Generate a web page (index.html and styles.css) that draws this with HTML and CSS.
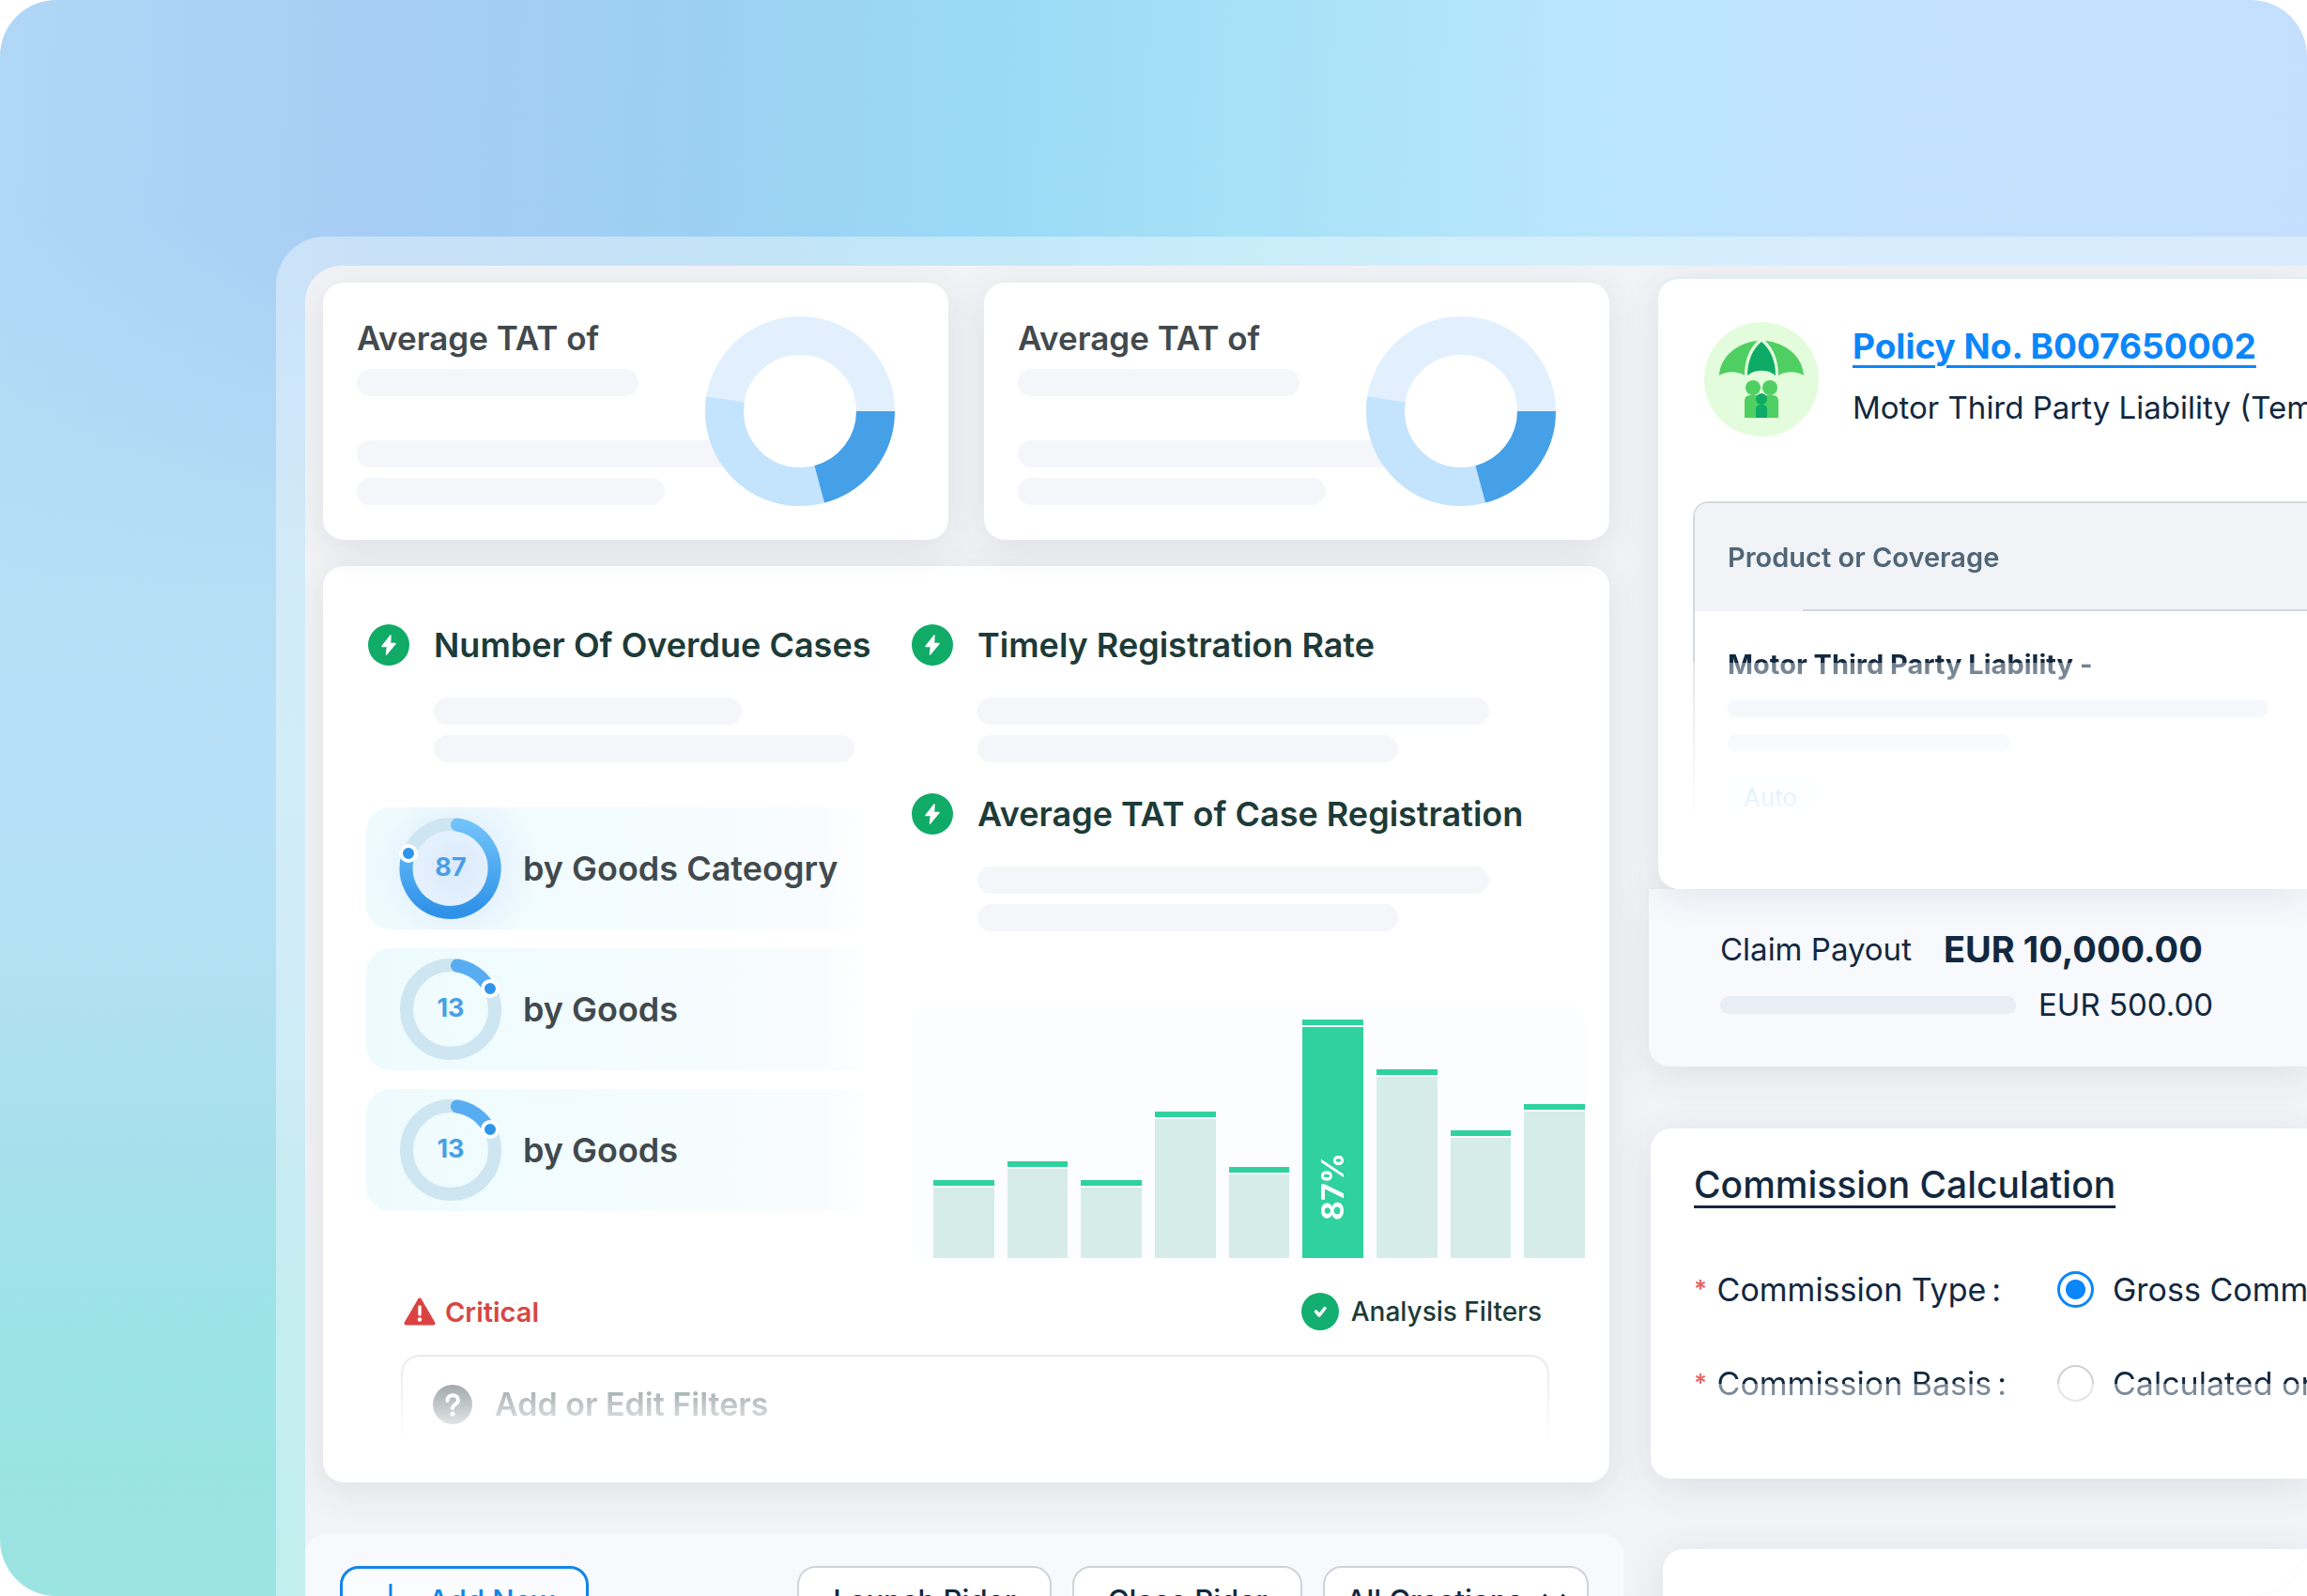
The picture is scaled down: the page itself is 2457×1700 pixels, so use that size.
FILE: index.html
```html
<!DOCTYPE html>
<html lang="en">
<head>
  <meta charset="UTF-8">
  <meta name="viewport" content="width=device-width, initial-scale=1.0">
  <title>Claims dashboard</title>
  <link rel="stylesheet" href="styles.css">
</head>
<body>
  <div class="stage">
    <div class="frame">
      <div class="board">

        <main class="main-col">
          <div class="tat-row">
            <section class="card tat-card">
              <div class="tat-text">
                <h2 class="title">Average TAT of</h2>
                <div class="bone w-300"></div>
                <div class="bone w-full space"></div>
                <div class="bone w-328"></div>
              </div>
              <svg class="donut" viewBox="0 0 202 202" aria-hidden="true">
                <g fill="none" stroke-width="41">
                  <circle cx="101" cy="101" r="80.5" stroke="#e2f0fe"/>
                  <circle cx="101" cy="101" r="80.5" stroke="#c4e3fd" pathLength="360" stroke-dasharray="114 246" stroke-dashoffset="-75"/>
                  <circle cx="101" cy="101" r="80.5" stroke="#45a0e8" pathLength="360" stroke-dasharray="75 285"/>
                </g>
              </svg>
            </section>
            <section class="card tat-card">
              <div class="tat-text">
                <h2 class="title">Average TAT of</h2>
                <div class="bone w-300"></div>
                <div class="bone w-full space"></div>
                <div class="bone w-328"></div>
              </div>
              <svg class="donut" viewBox="0 0 202 202" aria-hidden="true">
                <g fill="none" stroke-width="41">
                  <circle cx="101" cy="101" r="80.5" stroke="#e2f0fe"/>
                  <circle cx="101" cy="101" r="80.5" stroke="#c4e3fd" pathLength="360" stroke-dasharray="114 246" stroke-dashoffset="-75"/>
                  <circle cx="101" cy="101" r="80.5" stroke="#45a0e8" pathLength="360" stroke-dasharray="75 285"/>
                </g>
              </svg>
            </section>
          </div>

          <section class="card stats">
            <div class="stats-grid">
              <div class="stats-left">
                <div class="metric">
                  <svg class="bolt" viewBox="0 0 44 44" aria-hidden="true"><circle cx="22" cy="22" r="22" fill="#0fab67"/><path d="M24 12 15 23.500h5.500L19.500 32 29 20.500h-5.500z" fill="#fff" stroke="#fff" stroke-width="1.500" stroke-linejoin="round"/></svg>
                  <div class="metric-body">
                    <h3 class="title dark">Number Of Overdue Cases</h3>
                    <div class="bone w-328"></div>
                    <div class="bone w-448"></div>
                  </div>
                </div>
                <ul class="goods">
                  <li class="glow">
                    <svg class="ring" viewBox="0 0 120 120" aria-hidden="true">
                      <defs><linearGradient id="arc" x1="0" y1="0" x2="0" y2="1"><stop offset="0" stop-color="#70c2fa"/><stop offset="1" stop-color="#2f92e8"/></linearGradient></defs>
                      <circle cx="60" cy="60" r="47" fill="none" stroke="#cde6f1" stroke-width="14"/>
                      <path d="M67 13.500A47 47 0 1 1 15 45" fill="none" stroke="url(#arc)" stroke-width="14" stroke-linecap="round"/>
                      <circle cx="15" cy="44" r="8" fill="#2f95ec" stroke="#fff" stroke-width="4"/>
                      <text x="60" y="68">87</text>
                    </svg>
                    <span>by Goods Cateogry</span>
                  </li>
                  <li>
                    <svg class="ring" viewBox="0 0 120 120" aria-hidden="true">
                      <circle cx="60" cy="60" r="47" fill="none" stroke="#cde6f1" stroke-width="14"/>
                      <path d="M67 13.500A47 47 0 0 1 101 38" fill="none" stroke="#58adf2" stroke-width="14" stroke-linecap="round"/>
                      <circle cx="102" cy="38" r="8" fill="#2f95ec" stroke="#fff" stroke-width="4"/>
                      <text x="60" y="68">13</text>
                    </svg>
                    <span>by Goods</span>
                  </li>
                  <li>
                    <svg class="ring" viewBox="0 0 120 120" aria-hidden="true">
                      <circle cx="60" cy="60" r="47" fill="none" stroke="#cde6f1" stroke-width="14"/>
                      <path d="M67 13.500A47 47 0 0 1 101 38" fill="none" stroke="#58adf2" stroke-width="14" stroke-linecap="round"/>
                      <circle cx="102" cy="38" r="8" fill="#2f95ec" stroke="#fff" stroke-width="4"/>
                      <text x="60" y="68">13</text>
                    </svg>
                    <span>by Goods</span>
                  </li>
                </ul>
              </div>

              <div class="stats-right">
                <div class="metric">
                  <svg class="bolt" viewBox="0 0 44 44" aria-hidden="true"><circle cx="22" cy="22" r="22" fill="#0fab67"/><path d="M24 12 15 23.500h5.500L19.500 32 29 20.500h-5.500z" fill="#fff" stroke="#fff" stroke-width="1.500" stroke-linejoin="round"/></svg>
                  <div class="metric-body">
                    <h3 class="title dark">Timely Registration Rate</h3>
                    <div class="bone w-545"></div>
                    <div class="bone w-448"></div>
                  </div>
                </div>
                <div class="metric">
                  <svg class="bolt" viewBox="0 0 44 44" aria-hidden="true"><circle cx="22" cy="22" r="22" fill="#0fab67"/><path d="M24 12 15 23.500h5.500L19.500 32 29 20.500h-5.500z" fill="#fff" stroke="#fff" stroke-width="1.500" stroke-linejoin="round"/></svg>
                  <div class="metric-body">
                    <h3 class="title dark">Average TAT of Case Registration</h3>
                    <div class="bone w-545"></div>
                    <div class="bone w-448"></div>
                  </div>
                </div>
                <div class="chart">
                  <div class="bar" style="height: 83px"></div>
                  <div class="bar" style="height: 103px"></div>
                  <div class="bar" style="height: 83px"></div>
                  <div class="bar" style="height: 156px"></div>
                  <div class="bar" style="height: 97px"></div>
                  <div class="bar active" style="height: 254px"><span>87%</span></div>
                  <div class="bar" style="height: 201px"></div>
                  <div class="bar" style="height: 136px"></div>
                  <div class="bar" style="height: 164px"></div>
                </div>
              </div>
            </div>

            <div class="legend">
              <span class="critical">
                <svg width="34" height="30" viewBox="0 0 34 30" aria-hidden="true"><path d="M17 2.500 31.500 27.500H2.500z" fill="#da4341" stroke="#da4341" stroke-width="4" stroke-linejoin="round"/><path d="M17 10v8" stroke="#fff" stroke-width="3.500" stroke-linecap="round"/><circle cx="17" cy="23.500" r="2.200" fill="#fff"/></svg>
                Critical
              </span>
              <span class="analysis">
                <svg width="40" height="40" viewBox="0 0 40 40" aria-hidden="true"><circle cx="20" cy="20" r="20" fill="#13ae72"/><path d="m15.500 20 3.500 4 6-7.500" fill="none" stroke="#fff" stroke-width="3.500" stroke-linecap="round" stroke-linejoin="round"/></svg>
                Analysis Filters
              </span>
            </div>

            <label class="filter-box">
              <svg width="42" height="42" viewBox="0 0 42 42" aria-hidden="true"><circle cx="21" cy="21" r="21" fill="#6f7e82"/><path d="M15.500 17c0-8 11.500-7.500 11.500-.5 0 4-6 4.500-6 8.500" fill="none" stroke="#fff" stroke-width="4" stroke-linecap="round"/><circle cx="21" cy="31" r="2.500" fill="#fff"/></svg>
              <input type="text" placeholder="Add or Edit Filters" aria-label="Add or Edit Filters">
            </label>
          </section>

          <div class="toolbar">
            <button class="btn primary" type="button">
              <svg width="36" height="36" viewBox="0 0 36 36" aria-hidden="true"><path d="M18 1v34M1 18h34" stroke="currentColor" stroke-width="3" stroke-linecap="round"/></svg>
              Add New
            </button>
            <button class="btn push" type="button">Launch Rider</button>
            <button class="btn" type="button">Close Rider</button>
            <button class="btn menu" type="button">
              All Creations
              <svg width="26" height="16" viewBox="0 0 26 16" aria-hidden="true"><path d="m2 2 11 11L24 2" fill="none" stroke="currentColor" stroke-width="4"/></svg>
            </button>
          </div>
        </main>

        <aside class="side-col">
          <section class="card policy">
            <header class="policy-head">
              <svg class="umbrella" viewBox="0 0 122 122" aria-hidden="true">
                <circle cx="61" cy="61" r="61" fill="#e3fddc"/>
                <path d="M57 20C35 22 17 37 16 57c7-5 20-5 27 0 0-16 5-29 14-37z" fill="#4fcf62"/>
                <path d="M65 20c22 2 40 17 41 37-7-5-20-5-27 0 0-16-5-29-14-37z" fill="#4fcf62"/>
                <path d="M61 21c-10 8-15 21-15 36 8-7 22-7 30 0 0-15-5-28-15-36z" fill="#0eab66"/>
                <circle cx="52" cy="70" r="8" fill="#4fcf62"/>
                <circle cx="70" cy="70" r="8" fill="#4fcf62"/>
                <path d="M43 102V84q0-6 6-6h24q6 0 6 6v18z" fill="#4fcf62"/>
                <circle cx="61" cy="82" r="6" fill="#0eab66"/>
                <path d="M55 102V93q0-5 6-5t6 5v9z" fill="#0eab66"/>
              </svg>
              <div class="policy-text">
                <a class="policy-link" href="#">Policy No. B007650002</a>
                <p class="body-text">Motor Third Party Liability (Temporary)</p>
              </div>
            </header>
            <table class="coverage">
              <thead><tr><th scope="col">Product or Coverage</th></tr></thead>
              <tbody>
                <tr>
                  <td>
                    <strong>Motor Third Party Liability -</strong>
                    <div class="bone thin w-575"></div>
                    <div class="bone thin w-300"></div>
                    <span class="tag">Auto</span>
                  </td>
                </tr>
              </tbody>
            </table>
          </section>

          <section class="payout">
            <p><span class="body-text">Claim Payout</span> <b>EUR 10,000.00</b></p>
            <p><span class="payout-line"></span> <span class="body-text">EUR 500.00</span></p>
          </section>

          <section class="card commission">
            <h2>Commission Calculation</h2>
            <div class="field">
              <span class="field-name"><i>*</i> Commission Type<em>:</em></span>
              <label><input type="radio" name="type" checked> Gross Commission</label>
            </div>
            <div class="field fade">
              <span class="field-name"><i>*</i> Commission Basis<em>:</em></span>
              <label><input type="radio" name="basis"> Calculated on premium</label>
            </div>
          </section>

          <section class="card blank"></section>
        </aside>

      </div>
    </div>
  </div>
</body>
</html>
```
FILE: styles.css
```css
* {
  box-sizing: border-box;
}
body {
  margin: 0;
  background: #fff;
  font-family: Inter, "Liberation Sans", sans-serif;
  color: #12283f;
}
h2, h3, p, ul {
  margin: 0;
  padding: 0;
}
.stage {
  height: 100vh;
  overflow: hidden;
  border-radius: 60px;
  padding: 252px 0 0 294px;
  background:
    linear-gradient(180deg, rgba(182, 223, 247, 0) 14%, #b6dff6 38%, #b6e0f7 50%, #b1e0f3 62%, #a5e0eb 74%, #9be3e5 84%, #9be4e2) 0 0 / 325px 100% no-repeat,
    linear-gradient(92deg, #b0d7f6, #a7cdf4 16%, #9cd0f2 30%, #9adaf5 42%, #a6e1f7 53%, #b8e6fc 66%, #c2e1fd 80%, #c4dffd);
}
.frame {
  padding: 31px 0 0 31px;
  border-radius: 52px 0 0 0;
  background: rgba(245, 250, 252, 0.44);
}
.board {
  display: grid;
  grid-template-columns: minmax(0, 2fr) minmax(0, 1fr);
  gap: 26px;
  border-radius: 38px 0 0 0;
  background: #f2f3f6;
  overflow: hidden;
}
.card {
  background: #fff;
  border-radius: 22px;
  box-shadow: 0 8px 40px rgba(40, 60, 80, 0.1);
}
.title {
  font-size: 36px;
  line-height: 44px;
  font-weight: 600;
  color: #42494d;
  white-space: nowrap;
}
.title.dark {
  color: #1d3b38;
}

/* skeleton lines */
.bone {
  height: 29px;
  border-radius: 15px;
  background: #f4f6fa;
}
.bone.thin {
  height: 19px;
  border-radius: 8px;
  background: #eaf0f8;
}
.w-300 { width: 300px; }
.w-328 { width: 328px; }
.w-448 { width: 448px; }
.w-545 { width: 545px; }
.w-575 { width: 575px; }
.w-full { width: 400px; }

/* left column */
.main-col {
  padding-top: 18px;
}
.tat-row {
  display: grid;
  grid-template-columns: 1fr 1fr;
  gap: 38px;
  margin: 0 15px 28px 19px;
}
.tat-card {
  display: flex;
  justify-content: space-between;
  padding: 36px 57px 36px 36px;
}
.tat-text {
  display: flex;
  flex-direction: column;
  gap: 11px;
  width: 371px;
}
.tat-text .title {
  margin-top: 1px;
  font-size: 35px;
}
.tat-text .space {
  margin-top: 36px;
}
.donut {
  flex: none;
  width: 202px;
  height: 202px;
}
.stats {
  margin: 0 15px 55px 19px;
  padding: 62px 26px 30px 45px;
}
.stats-grid {
  display: grid;
  grid-template-columns: 545px minmax(0, 1fr);
  gap: 37px;
}
.metric {
  display: flex;
  gap: 26px;
}
.bolt {
  flex: none;
  width: 44px;
  height: 44px;
  margin-left: 3px;
}
.metric-body {
  display: flex;
  flex-direction: column;
  gap: 11px;
}
.metric-body .title {
  margin-bottom: 23px;
}
.stats-right .metric {
  margin-bottom: 33px;
}
.stats-right .bolt {
  margin-left: 0;
}
.stats-right {
  min-width: 0;
}
.goods {
  display: flex;
  flex-direction: column;
  gap: 20px;
  margin: 48px 0 0 1px;
  list-style: none;
}
.goods li {
  display: flex;
  align-items: center;
  gap: 17px;
  height: 130px;
  padding-left: 30px;
  border-radius: 26px;
  background: linear-gradient(90deg, #eefbfe, #f3fcfe 50%, #f9fcff 90%, #fff);
  font-size: 36px;
  font-weight: 600;
  color: #42494d;
}
.goods .glow {
  background:
    radial-gradient(circle at 95px 65px, #dbe9fc, transparent 90px),
    linear-gradient(90deg, #eefbfe, #f3fcfe 50%, #f9fcff 90%, #fff);
}
.ring {
  width: 120px;
  height: 120px;
}
.ring text {
  font-size: 27px;
  font-weight: 700;
  fill: #479fe3;
  text-anchor: middle;
}
.chart {
  display: flex;
  align-items: flex-end;
  gap: 14px;
  height: 268px;
  margin-top: 80px;
  padding-left: 23px;
  border-radius: 16px;
  background: #fbfdff;
}
.bar {
  flex: 1;
  border-top: 6px solid #2fd29e;
  background: linear-gradient(#fff 2px, #d5ede6 2px);
}
.bar.active {
  display: flex;
  align-items: flex-end;
  justify-content: center;
  padding-bottom: 40px;
  background: linear-gradient(#fff 2px, #2fd29e 2px);
}
.bar span {
  writing-mode: vertical-rl;
  transform: rotate(180deg);
  font-size: 32px;
  line-height: 40px;
  font-weight: 700;
  color: #fff;
}
.legend {
  display: flex;
  justify-content: space-between;
  margin-top: 37px;
  padding: 0 46px 0 41px;
}
.legend span {
  display: flex;
  align-items: center;
}
.critical {
  gap: 10px;
  font-size: 29px;
  font-weight: 600;
  color: #d74642;
}
.analysis {
  gap: 13px;
  font-size: 28px;
  font-weight: 500;
  color: #1d3b38;
}
.filter-box {
  display: flex;
  align-items: center;
  gap: 22px;
  height: 106px;
  margin: 26px 38px 0 38px;
  padding: 0 32px;
  border: 2px solid #e6e9ea;
  border-radius: 20px;
  -webkit-mask-image: linear-gradient(#000, transparent 94px);
  mask-image: linear-gradient(#000, transparent 94px);
}
.filter-box input {
  flex: 1;
  border: 0;
  outline: 0;
  background: none;
  font: 600 34px/44px Inter, sans-serif;
}
.filter-box input::placeholder {
  color: #6f7c80;
  opacity: 1;
}
.toolbar {
  display: flex;
  gap: 22px;
  padding: 34px 37px;
  border-radius: 22px;
  background: #f7f9fd;
}
.btn {
  display: flex;
  align-items: center;
  justify-content: center;
  height: 74px;
  padding: 0 36px;
  border: 2px solid #cfd3d8;
  border-radius: 20px;
  background: #fff;
  font: 500 31px/40px Inter, sans-serif;
  color: #12283f;
  white-space: nowrap;
}
.btn.primary {
  gap: 22px;
  padding: 0 33px;
  border: 3px solid #1285e8;
  background: #fafcff;
  color: #1285e8;
}
.btn.push {
  margin-left: auto;
}
.btn.menu {
  gap: 20px;
  padding: 0 22px;
}

/* right column */
.side-col {
  display: flex;
  flex-direction: column;
  padding-top: 12px;
  white-space: nowrap;
}
.side-col .card {
  border-radius: 22px 0 0 22px;
}
.policy {
  position: relative;
  height: 652px;
  margin-left: 11px;
  padding: 46px 0 0 37px;
  border-top: 2px solid #daedfa;
}
.policy-head {
  display: flex;
  gap: 36px;
  margin-left: 12px;
}
.umbrella {
  flex: none;
  width: 122px;
  height: 122px;
}
.policy-link {
  display: inline-block;
  margin-top: 2px;
  font-size: 37px;
  line-height: 48px;
  font-weight: 700;
  color: #0b86fb;
  text-decoration-thickness: 3px;
  text-underline-offset: 7px;
}
.body-text {
  font-size: 33px;
  line-height: 44px;
  font-weight: 400;
}
.policy-text .body-text {
  margin-top: 19px;
}
.coverage {
  width: 100%;
  margin-top: 69px;
  border: 2px solid #d3d8dc;
  border-right: 0;
  border-bottom: 0;
  border-radius: 16px 0 0 0;
  border-spacing: 0;
  overflow: hidden;
  text-align: left;
  -webkit-mask-image: linear-gradient(#000 172px, rgba(0, 0, 0, 0.6) 172px, transparent 350px);
  mask-image: linear-gradient(#000 172px, rgba(0, 0, 0, 0.6) 172px, transparent 350px);
}
.coverage th {
  height: 115px;
  padding: 0 35px;
  background: linear-gradient(#d3d6da, #d3d6da) 115px 100% / 100% 2px no-repeat #f1f3f6;
  font-size: 29px;
  font-weight: 600;
  color: #506577;
}
.coverage td {
  padding: 38px 35px 0;
}
.coverage strong {
  font-size: 29px;
  line-height: 38px;
  font-weight: 700;
}
.coverage .bone {
  margin-top: 18px;
}
.tag {
  display: inline-block;
  margin-top: 26px;
  padding: 4px 17px;
  border-radius: 8px;
  background: #eef8ff;
  font-size: 26px;
  line-height: 38px;
  color: #1f93e8;
}
.payout {
  height: 189px;
  margin-left: 1px;
  padding: 40px 0 0 76px;
  border-radius: 0 0 0 22px;
  background: #f7f9fd;
  box-shadow: 0 8px 40px rgba(40, 60, 80, 0.1);
}
.payout p {
  display: flex;
  align-items: center;
}
.payout p + p {
  margin-top: 13px;
}
.payout b {
  margin-left: 34px;
  font-size: 38px;
  line-height: 48px;
  font-weight: 700;
}
.payout-line {
  width: 315px;
  height: 19px;
  margin-right: 24px;
  border-radius: 10px;
  background: #e7eef5;
}
.commission {
  height: 373px;
  margin: 66px 0 0 3px;
  padding: 36px 0 0 46px;
}
.commission h2 {
  font-size: 39px;
  line-height: 48px;
  font-weight: 500;
  text-decoration: underline;
  text-decoration-thickness: 3px;
  text-underline-offset: 8px;
}
.field {
  display: flex;
  align-items: center;
  height: 44px;
  margin-top: 65px;
  font-size: 34px;
}
.field.fade {
  margin-top: 56px;
  -webkit-mask-image: linear-gradient(#000 23px, rgba(0, 0, 0, 0.55) 23px);
  mask-image: linear-gradient(#000 23px, rgba(0, 0, 0, 0.55) 23px);
}
.field-name {
  flex: none;
  width: 387px;
}
.field i {
  margin-right: 1px;
  font-size: 26px;
  font-style: normal;
  font-weight: 600;
  vertical-align: 4px;
  color: #e66565;
}
.field em {
  margin-left: 6px;
  font-style: normal;
}
.field label {
  display: flex;
  align-items: center;
  gap: 20px;
}
.field input {
  appearance: none;
  flex: none;
  width: 39px;
  height: 39px;
  margin: 0;
  border: 2px solid #d0d0d0;
  border-radius: 50%;
}
.field input:checked {
  border: 3px solid #0b86fb;
  background: radial-gradient(circle, #0b86fb 10px, #fff 11px);
}
.blank {
  height: 200px;
  margin: 75px 0 0 16px;
}
```
